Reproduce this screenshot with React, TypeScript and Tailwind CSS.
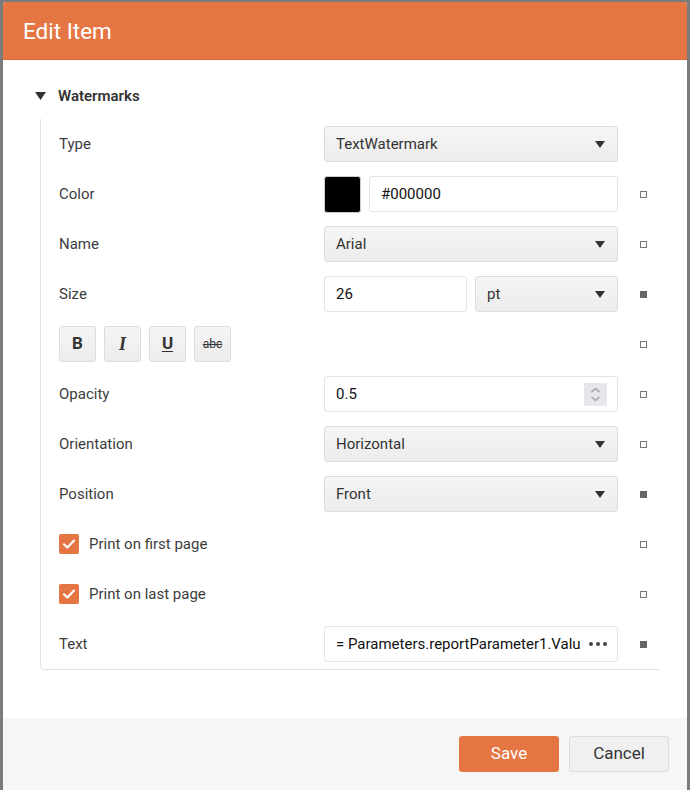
import React from 'react';

const ORANGE = 'bg-[#e57643]';

const Arrow = () => (
  <svg width="10" height="7" viewBox="0 0 10 7" className="shrink-0">
    <path d="M0 0 L10 0 L5 7 Z" fill="#333" />
  </svg>
);

const Marker = ({ filled, hidden }: { filled?: boolean; hidden?: boolean }) => (
  <div
    className={`ml-[22px] w-[7px] h-[7px] shrink-0 ${
      hidden ? '' : filled ? 'bg-[#666]' : 'border border-[#777] bg-white'
    }`}
  />
);

const Select = ({ value, className = 'w-[294px]' }: { value: string; className?: string }) => (
  <div
    className={`${className} h-[36px] flex items-center justify-between pl-[11px] pr-[12px] rounded-[3px] border border-[#dcdcdc] bg-gradient-to-b from-[#f5f5f5] to-[#ececec] text-[#333] text-[15px]`}
  >
    <span>{value}</span>
    <Arrow />
  </div>
);

const Input = ({ value, className = 'w-[294px]', children }: { value: string; className?: string; children?: React.ReactNode }) => (
  <div
    className={`${className} h-[36px] flex items-center justify-between pl-[11px] pr-[10px] rounded-[3px] border border-[#e3e3e3] bg-white text-[#111] text-[15px]`}
  >
    <span className="whitespace-nowrap overflow-hidden">{value}</span>
    {children}
  </div>
);

const Row = ({ label, children, marker }: { label?: string; children: React.ReactNode; marker?: 'empty' | 'filled' | 'none' }) => (
  <div className="h-[50px] flex items-center pl-[18px]">
    {label !== undefined && <div className="w-[265px] text-[15px] text-[#3c3c3c]">{label}</div>}
    {children}
    <Marker filled={marker === 'filled'} hidden={marker === 'none'} />
  </div>
);

const Check = ({ label }: { label: string }) => (
  <div className="w-[559px] flex items-center">
    <div className={`w-[20px] h-[20px] rounded-[2px] ${ORANGE} flex items-center justify-center`}>
      <svg width="16" height="16" viewBox="0 0 16 16">
        <path d="M3 8.3 L6.4 11.5 L13 4.6" fill="none" stroke="white" strokeWidth="2.2" strokeLinecap="round" strokeLinejoin="round" />
      </svg>
    </div>
    <span className="ml-[10px] text-[15px] text-[#3c3c3c]">{label}</span>
  </div>
);

const FmtButton = ({ children }: { children: React.ReactNode }) => (
  <div className="w-[37px] h-[36px] flex items-center justify-center rounded-[3px] border border-[#dcdcdc] bg-gradient-to-b from-[#f5f5f5] to-[#ececec] text-[#333]">
    {children}
  </div>
);

export default function App() {
  return (
    <div className="h-[790px] bg-[#7b7b7b] pt-[2px] pl-[3px] overflow-hidden" style={{ fontFamily: 'Roboto, "Liberation Sans", sans-serif' }}>
      <div className="w-[684px] h-[788px] bg-white rounded-t-[3px] flex flex-col overflow-hidden">
        {/* Header */}
        <div className={`h-[58px] shrink-0 ${ORANGE} border-b border-[#d8693a] flex items-center px-[20px] pt-[2px]`}>
          <span className="text-white text-[22.5px]">Edit Item</span>
        </div>

        {/* Body */}
        <div className="flex-1 pl-[32px] pt-[24px]">
          <div className="h-[24px] flex items-center">
            <svg width="11" height="8" viewBox="0 0 11 8">
              <path d="M0 0 L11 0 L5.5 8 Z" fill="#333" />
            </svg>
            <span className="ml-[12px] text-[15px] font-semibold text-[#333]">Watermarks</span>
          </div>

          <div className="mt-[11px] ml-[5px] w-[620px] border-l border-b border-[#e2e2e2] rounded-bl-[5px]">
            <Row label="Type" marker="none">
              <Select value="TextWatermark" />
            </Row>
            <Row label="Color">
              <div className="w-[294px] flex items-center gap-[8px]">
                <div className="w-[37px] h-[37px] rounded-[3px] bg-black border border-[#ccc]" />
                <Input value="#000000" className="flex-1" />
              </div>
            </Row>
            <Row label="Name">
              <Select value="Arial" />
            </Row>
            <Row label="Size" marker="filled">
              <div className="w-[294px] flex items-center gap-[8px]">
                <Input value="26" className="w-[143px]" />
                <Select value="pt" className="w-[143px]" />
              </div>
            </Row>
            <Row>
              <div className="w-[559px] flex items-center gap-[8px]">
                <FmtButton>
                  <span className="text-[17px] font-bold">B</span>
                </FmtButton>
                <FmtButton>
                  <span className="text-[18px] italic font-bold" style={{ fontFamily: '"Liberation Serif", serif' }}>I</span>
                </FmtButton>
                <FmtButton>
                  <span className="text-[17px] font-bold underline underline-offset-2">U</span>
                </FmtButton>
                <FmtButton>
                  <span className="text-[12px] line-through">abc</span>
                </FmtButton>
              </div>
            </Row>
            <Row label="Opacity">
              <Input value="0.5">
                <div className="w-[23px] h-[23px] bg-[#e6e6ec] flex items-center justify-center">
                  <svg width="11" height="15" viewBox="0 0 11 15">
                    <path d="M1.5 5 L5.5 1.5 L9.5 5" fill="none" stroke="#9a9a9a" strokeWidth="1.2" />
                    <path d="M1.5 10 L5.5 13.5 L9.5 10" fill="none" stroke="#9a9a9a" strokeWidth="1.2" />
                  </svg>
                </div>
              </Input>
            </Row>
            <Row label="Orientation">
              <Select value="Horizontal" />
            </Row>
            <Row label="Position" marker="filled">
              <Select value="Front" />
            </Row>
            <Row>
              <Check label="Print on first page" />
            </Row>
            <Row>
              <Check label="Print on last page" />
            </Row>
            <Row label="Text" marker="filled">
              <Input value="= Parameters.reportParameter1.Valu">
                <span className="flex gap-[3px] ml-[8px] shrink-0">
                  <span className="w-[4px] h-[4px] rounded-full bg-[#444]" />
                  <span className="w-[4px] h-[4px] rounded-full bg-[#444]" />
                  <span className="w-[4px] h-[4px] rounded-full bg-[#444]" />
                </span>
              </Input>
            </Row>
          </div>
        </div>

        {/* Footer */}
        <div className="h-[72px] shrink-0 bg-[#f6f6f6] flex justify-end items-start pt-[18px] pr-[18px] gap-[10px]">
          <button className={`w-[100px] h-[36px] rounded-[3px] ${ORANGE} text-white text-[17px]`}>Save</button>
          <button className="w-[100px] h-[36px] rounded-[3px] border border-[#dcdcdc] bg-[#f0f0f0] text-[#333] text-[17px]">
            Cancel
          </button>
        </div>
      </div>
    </div>
  );
}
